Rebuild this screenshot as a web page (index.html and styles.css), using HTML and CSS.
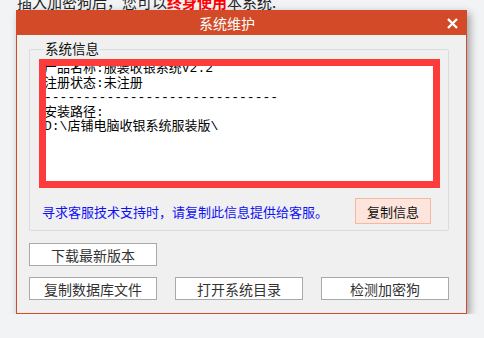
FILE: index.html
```html
<!DOCTYPE html>
<html lang="zh-CN">
<head>
    <meta charset="UTF-8">
    <title>系统维护</title>
    <link rel="stylesheet" href="styles.css">
</head>
<body>
    <p class="notice">插入加密狗后，您可以<b class="hot">终身使用</b>本系统.</p>

    <div class="dialog">
        <div class="title-bar">
            <span class="title">系统维护</span>
            <button class="close-button" aria-label="关闭">
                <svg width="11" height="11" viewBox="0 0 11 11">
                    <path d="M1 1 L10 10 M10 1 L1 10" stroke="#fff" stroke-width="2.4" fill="none"/>
                </svg>
            </button>
        </div>

        <div class="dialog-body">
            <fieldset class="info-group">
                <legend>系统信息</legend>
                <div class="info-box">
                    <pre class="info-text">产品名称:服装收银系统V2.2
注册状态:未注册
------------------------------
安装路径:
D:\店铺电脑收银系统服装版\</pre>
                </div>
                <div class="info-footer">
                    <span class="hint">寻求客服技术支持时，请复制此信息提供给客服。</span>
                    <button class="copy-button">复制信息</button>
                </div>
            </fieldset>

            <div class="button-row">
                <button class="plain-button">下载最新版本</button>
            </div>
            <div class="button-row">
                <button class="plain-button">复制数据库文件</button>
                <button class="plain-button">打开系统目录</button>
                <button class="plain-button">检测加密狗</button>
            </div>
        </div>
    </div>
</body>
</html>
```

FILE: styles.css
```css
body {
    margin: 0;
    background-color: #f2f3f5;
    font-family: "Noto Sans CJK SC", "Liberation Sans", sans-serif;
    color: #222;
    overflow: hidden;
}

.notice {
    margin: -6px 0 0 0;
    padding-left: 17px;
    font-size: 15px;
    line-height: 15px;
    height: 15px;
    color: #222;
}

.hot {
    color: #ff0000;
}

.dialog {
    margin: 1px 0 0 16px;
    width: 451px;
    box-sizing: border-box;
    border: 1px solid #d24a27;
    background-color: #f0f0f0;
    box-shadow: 3px 3px 8px rgba(0, 0, 0, 0.35);
}

.title-bar {
    display: flex;
    align-items: center;
    height: 24px;
    margin: -1px -1px 0 -1px;
    padding-top: 1px;
    background-color: #d24a27;
}

.title {
    flex: 1;
    text-align: center;
    color: #fff;
    font-size: 14px;
    line-height: 16px;
}

.close-button {
    width: 29px;
    height: 24px;
    padding: 0;
    border: none;
    background: none;
    display: flex;
    align-items: center;
    justify-content: center;
}

.dialog-body {
    padding: 6px 17px 13px 12px;
}

.info-group {
    margin: 0;
    padding: 1px 8px 6px 9px;
    border: 1px solid #d6dde3;
    border-radius: 2px;
}

.info-group legend {
    margin-left: 5px;
    padding: 0 1px 3px 1px;
    font-size: 13.5px;
    line-height: 14px;
    color: #111;
}

.info-box {
    height: 129px;
    box-sizing: border-box;
    border: 7px solid #fd3b3b;
    background-color: #fff;
    overflow: hidden;
}

.info-text {
    margin: -4px 0 0 -2px;
    font-family: "Liberation Mono", "Noto Sans CJK SC", monospace;
    font-size: 13px;
    line-height: 14.5px;
    color: #000;
}

.info-footer {
    display: flex;
    align-items: center;
    justify-content: space-between;
    margin-top: 10px;
    padding-left: 3px;
}

.hint {
    color: #1010f5;
    font-size: 13px;
}

.copy-button {
    width: 76px;
    height: 26px;
    margin-right: 9px;
    border: 1px solid #f3b9a1;
    background-color: #fde4dc;
    font-family: inherit;
    font-size: 13px;
    color: #111;
    padding: 0;
}

.button-row {
    display: flex;
    gap: 18px;
    margin-top: 11px;
}

.button-row:first-of-type {
    margin-top: 12px;
}

.plain-button {
    width: 128px;
    height: 23px;
    padding: 0;
    border: 1px solid #a9a9a9;
    background-color: #fff;
    font-family: inherit;
    font-size: 14px;
    line-height: 20px;
    color: #333;
}
```
